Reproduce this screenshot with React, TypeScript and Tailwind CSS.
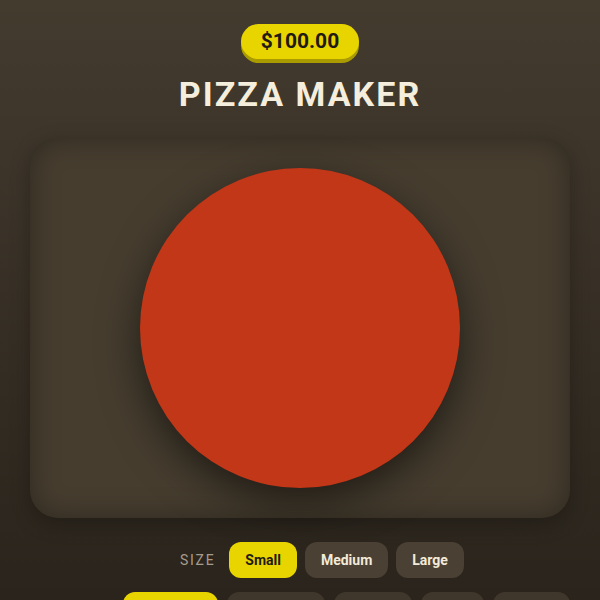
import React from "react";

const sizes = ["Small", "Medium", "Large"];
const toppings = [
  { label: "Pepperoni", w: "w-[95px]" },
  { label: "Mushrooms", w: "w-[98px]" },
  { label: "Olives", w: "w-[78px]" },
  { label: "Ham", w: "w-[63px]" },
  { label: "Onions", w: "w-[77px]" },
];

export default function App() {
  return (
    <div
      className="h-[600px] w-[600px] overflow-hidden bg-gradient-to-b from-[#443b2f] to-[#2a241c] flex flex-col items-center"
      style={{ fontFamily: "Roboto, 'Noto Sans', sans-serif" }}
    >
      <div className="shrink-0 mt-[24px] h-[35px] w-[118px] rounded-full bg-[#e8d500] shadow-[0_4px_0_#a99b00] flex items-center justify-center text-[21px] font-bold text-[#1f1a12]">
        $100.00
      </div>
      <h1 className="shrink-0 mt-[15px] text-[34px] leading-[40px] font-bold tracking-[0.06em] text-[#f6eedc]">
        PIZZA MAKER
      </h1>
      <div className="shrink-0 mt-[24px] h-[380px] w-[540px] rounded-[28px] bg-[#463d2f] shadow-[inset_0_0_28px_rgba(0,0,0,0.35),0_6px_20px_rgba(0,0,0,0.25)] flex items-center justify-center">
        <div className="h-[320px] w-[320px] rounded-full bg-[#c13718] shadow-[0_14px_40px_rgba(0,0,0,0.55)]" />
      </div>
      <div className="shrink-0 mt-[24px] flex items-center gap-2 pl-[44px]">
        <span className="mr-[6px] text-[14px] tracking-[0.12em] text-[#a69c8c]">SIZE</span>
        {sizes.map((s, i) => (
          <button
            key={s}
            className={
              i === 0
                ? "h-[36px] rounded-[12px] bg-[#e8d500] px-4 text-[14px] font-bold text-[#1f1a12]"
                : "h-[36px] rounded-[12px] bg-[#4a4034] px-4 text-[14px] font-bold text-[#f3ead8]"
            }
          >
            {s}
          </button>
        ))}
      </div>
      <div className="shrink-0 mt-[14px] flex items-center gap-[9px] pl-[92px]">
        {toppings.map((t, i) => (
          <button
            key={t.label}
            className={
              i === 0
                ? `h-[36px] ${t.w} rounded-[12px] bg-[#e8d500] text-[14px] font-bold text-[#1f1a12]`
                : `h-[36px] ${t.w} rounded-[12px] bg-[#40372c] text-[14px] font-bold text-[#f3ead8]`
            }
          >
            {t.label}
          </button>
        ))}
      </div>
    </div>
  );
}
